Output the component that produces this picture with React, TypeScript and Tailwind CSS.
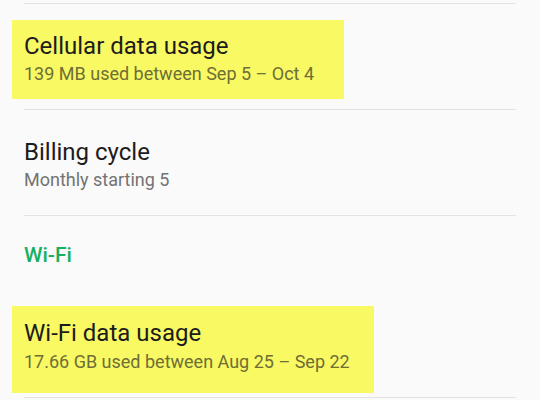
import React from "react";

interface UsageRowProps {
  title: string;
  summary: string;
  highlight?: string;
}

function Divider() {
  return <div className="ml-6 mr-6 h-px bg-[#e3e3e3]" />;
}

function UsageRow({ title, summary, highlight }: UsageRowProps) {
  return (
    <div className="pl-3 pt-4 pb-[10px]">
      <div className={`pt-3 pb-[14px] pl-3 ${highlight ?? ""}`}>
        <div className="text-[24px] leading-[28px] text-[#1c1c1c]">{title}</div>
        <div className={`mt-[3px] text-[18px] leading-[22px] ${highlight ? "text-[#6e6e35]" : "text-[#737373]"}`}>
          {summary}
        </div>
      </div>
    </div>
  );
}

export default function App() {
  return (
    <div className="h-[400px] w-[540px] overflow-hidden bg-[#fafafa] pt-[3px] font-['Roboto',sans-serif]">
      <Divider />
      <UsageRow
        title="Cellular data usage"
        summary="139 MB used between Sep 5 – Oct 4"
        highlight="w-[332px] bg-[#f9f964]"
      />
      <Divider />
      <UsageRow title="Billing cycle" summary="Monthly starting 5" />
      <Divider />

      {/* Wi-Fi section */}
      <div className="h-[75px] pl-6 pt-[27px]">
        <div className="text-[21px] font-medium leading-[24px] text-[#17b063]">Wi-Fi</div>
      </div>
      <div className="pl-3 pt-[15px] pb-1">
        <div className="w-[362px] bg-[#f9f964] pl-3 pt-[13px] pb-[20px]">
          <div className="text-[24px] leading-[28px] text-[#1c1c1c]">Wi-Fi data usage</div>
          <div className="mt-1 text-[18px] leading-[22px] text-[#6e6e35]">
            17.66 GB used between Aug 25 – Sep 22
          </div>
        </div>
      </div>
      <Divider />
    </div>
  );
}
